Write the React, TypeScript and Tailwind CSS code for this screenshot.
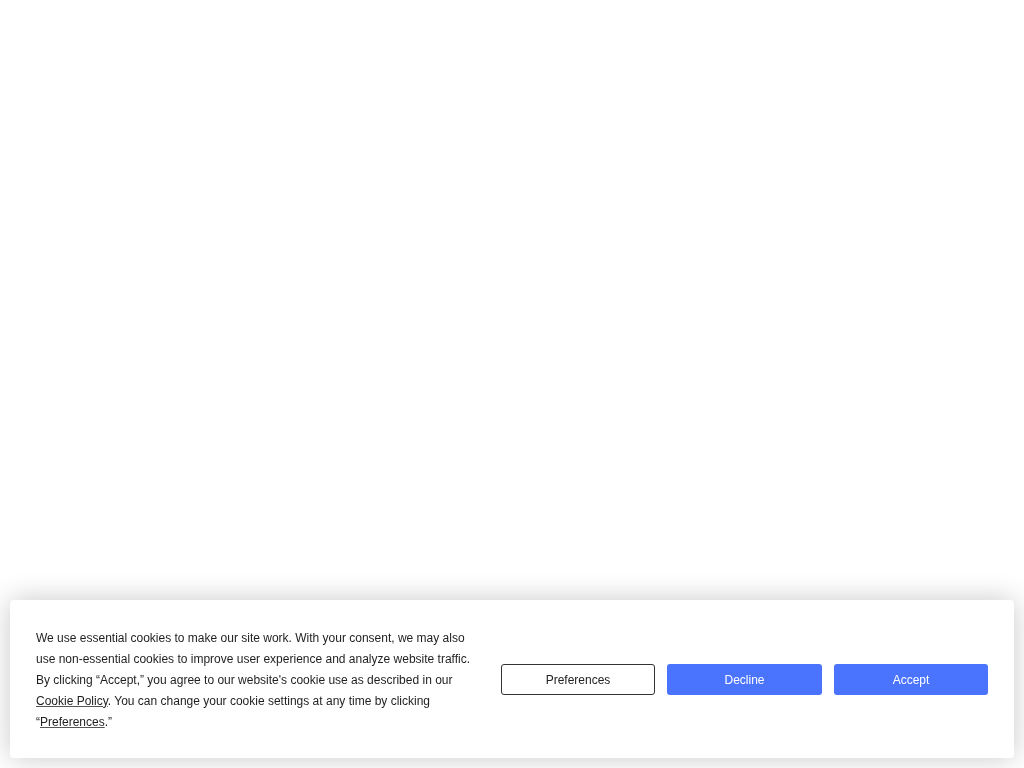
export default function App() {
  return (
    <div className="min-h-screen bg-white" style={{ fontFamily: '"Liberation Sans", Arial, sans-serif' }}>
      <div className="fixed left-[10px] right-[10px] bottom-[10px] h-[158px] rounded-[4px] bg-white shadow-[0_0_28px_rgba(0,0,0,0.22)] flex items-center justify-between px-[26px]">
        <p className="w-[445px] pt-[2px] text-[12px] leading-[21px] text-[#1e1e1e]">
          We use essential cookies to make our site work. With your consent, we may also use non-essential cookies to
          improve user experience and analyze website traffic. By clicking “Accept,” you agree to our website's cookie
          use as described in our{' '}
          <a href="#" className="underline decoration-[#555]">
            Cookie Policy
          </a>
          . You can change your cookie settings at any time by clicking “
          <a href="#" className="underline decoration-[#555]">
            Preferences
          </a>
          .”
        </p>
        <div className="flex gap-3">
          <button className="w-[154px] h-[31px] pt-[2px] rounded-[3px] border border-[#333] bg-white text-[12px] text-[#222]">
            Preferences
          </button>
          <button className="w-[155px] h-[31px] pt-[2px] rounded-[3px] bg-[#4a73fe] text-[12px] text-white">
            Decline
          </button>
          <button className="w-[154px] h-[31px] pt-[2px] rounded-[3px] bg-[#4a73fe] text-[12px] text-white">
            Accept
          </button>
        </div>
      </div>
    </div>
  )
}
